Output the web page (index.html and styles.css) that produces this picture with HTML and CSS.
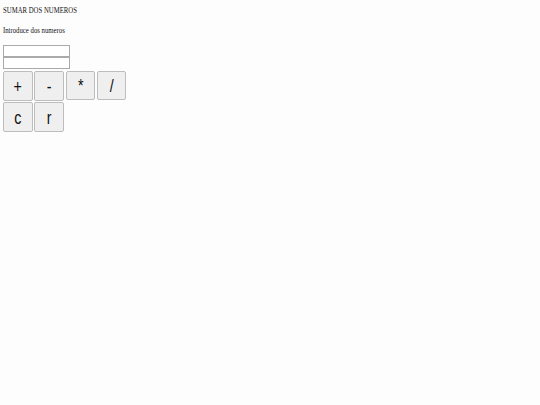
FILE: index.html
```html
<!DOCTYPE html>
<html>
<head>
<meta charset="utf-8">
<link rel="stylesheet" href="styles.css">
</head>
<body>
<div class="page">
  <p class="title">SUMAR DOS NUMEROS</p>
  <p class="label">Introduce dos numeros</p>
  <div class="inputs">
    <input class="field" type="text">
    <input class="field" type="text">
  </div>
  <div class="keys">
    <div class="row">
      <button class="key"><span class="glyph">+</span></button>
      <button class="key"><span class="glyph">-</span></button>
      <button class="key short"><span class="glyph">*</span></button>
      <button class="key short"><span class="glyph">/</span></button>
    </div>
    <div class="row">
      <button class="key"><span class="glyph">c</span></button>
      <button class="key"><span class="glyph">r</span></button>
    </div>
  </div>
</div>
</body>
</html>
```

FILE: styles.css
```css
html, body {
  margin: 0;
  padding: 0;
  background: #fdfdfd;
}
.page {
  padding: 3px 3px;
  font-family: "Liberation Serif", serif;
  color: #111;
}
.title, .label {
  margin: 0;
  line-height: 10px;
  font-size: 9px;
  transform: scaleX(0.75);
  transform-origin: left center;
  white-space: nowrap;
}
.title {
  margin-top: 2px;
}
.label {
  margin-top: 10px;
}
.inputs {
  display: flex;
  flex-direction: column;
  margin-top: 10px;
}
.field {
  box-sizing: border-box;
  width: 67px;
  height: 12px;
  margin: 0;
  padding: 0;
  border: 1px solid #aaaaaa;
  background: #fff;
}
.keys {
  display: flex;
  flex-direction: column;
  gap: 1px;
  margin-top: 2px;
}
.row {
  display: flex;
  align-items: flex-start;
  gap: 1.8px;
}
.key {
  box-sizing: border-box;
  width: 29.5px;
  height: 30px;
  margin: 0;
  padding: 0;
  border: 1px solid #bdbdbd;
  border-radius: 2px;
  background: #efefef;
  font-family: "Liberation Sans", Arial, sans-serif;
  font-size: 19px;
  line-height: 1;
  color: #111;
}
.glyph {
  display: inline-block;
  transform: scaleX(0.75);
}
.key.short {
  height: 29px;
}
```
